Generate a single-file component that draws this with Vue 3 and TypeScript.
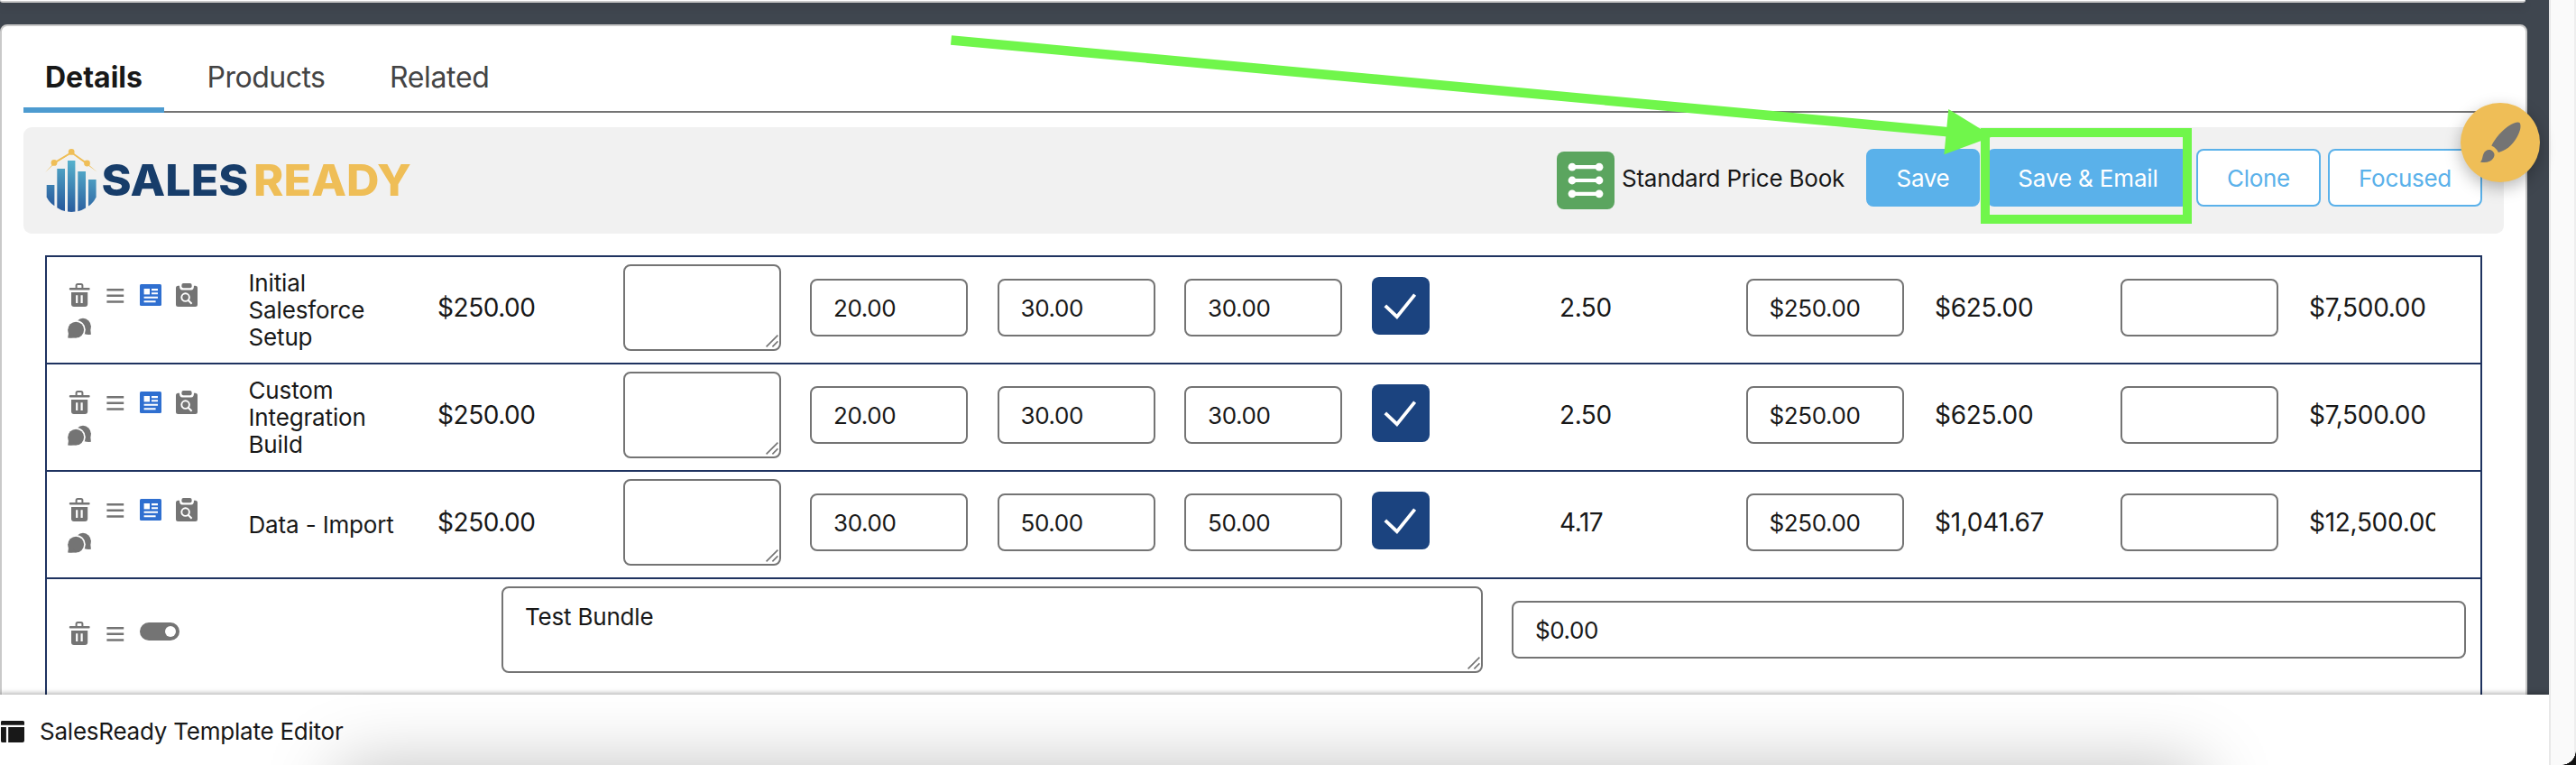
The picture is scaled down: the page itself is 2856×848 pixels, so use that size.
<script setup lang="ts">
interface Line {
  name: string
  rate: string
  low: string
  mid: string
  high: string
  months: string
  price: string
  monthly: string
  total: string
}

const tabs: string[] = ['Details', 'Products', 'Related']

const lines: Line[] = [
  { name: 'Initial Salesforce Setup', rate: '$250.00', low: '20.00', mid: '30.00', high: '30.00', months: '2.50', price: '$250.00', monthly: '$625.00', total: '$7,500.00' },
  { name: 'Custom Integration Build', rate: '$250.00', low: '20.00', mid: '30.00', high: '30.00', months: '2.50', price: '$250.00', monthly: '$625.00', total: '$7,500.00' },
  { name: 'Data - Import', rate: '$250.00', low: '30.00', mid: '50.00', high: '50.00', months: '4.17', price: '$250.00', monthly: '$1,041.67', total: '$12,500.00' },
]
</script>

<template>
  <div class="page">
    <main class="main">
      <section class="prev-card"></section>
      <section class="card">
        <nav class="tabs">
          <a v-for="(tab, i) in tabs" :key="tab" class="tab" :class="{ active: i === 0 }">{{ tab }}</a>
        </nav>

        <header class="toolbar">
          <svg class="logo" width="410" height="75" viewBox="50 165 410 75">
            <defs>
              <linearGradient id="barFill" gradientUnits="userSpaceOnUse" x1="88" y1="180" x2="72" y2="236">
                <stop offset="0" stop-color="#57b2cd" />
                <stop offset="1" stop-color="#27579b" />
              </linearGradient>
            </defs>
            <g fill="url(#barFill)">
              <path d="M51.7 205H60.4V228.3Q55 225 51.7 218.5Z" />
              <path d="M63.3 187H72V234Q67 233 63.3 230.3Z" />
              <path d="M75 178H83.4V234.6Q79 235.4 75 234.6Z" />
              <path d="M86.3 190H95V230.5Q91 233.2 86.3 234.2Z" />
              <path d="M98 199H106.6V218.5Q103.5 225 98 228.6Z" />
            </g>
            <path d="M50.2 191 60 180.4 79.2 168.6 96.5 181 107.8 190.8 96.5 182.4 79.2 170 60.5 181.6Z" fill="#efbe57" />
            <path d="M60 180.6 79.2 168.9 96.5 181.2" fill="none" stroke="#efbe57" stroke-width="1.7" />
            <g fill="#efbe57">
              <circle cx="60" cy="180.4" r="3.4" />
              <circle cx="79.2" cy="168.4" r="3.4" />
              <circle cx="96.5" cy="181" r="3.4" />
            </g>
            <text class="word sales" x="112.5" y="217" textLength="163" lengthAdjust="spacingAndGlyphs">SALES</text>
            <text class="word ready" x="281" y="217" textLength="175" lengthAdjust="spacingAndGlyphs">READY</text>
          </svg>

          <div class="actions">
            <svg class="book" width="64" height="64" viewBox="0 0 64 64">
              <rect width="64" height="64" rx="8" fill="#5ba55f" />
              <g stroke="#fff" stroke-width="4.2">
                <path d="M17 17.2H47M17 32H47M17 46.8H47" />
              </g>
              <g fill="#fff">
                <circle cx="17" cy="17.2" r="4.4" /><circle cx="47" cy="17.2" r="4.4" />
                <circle cx="17" cy="32" r="4.4" /><circle cx="47" cy="32" r="4.4" />
                <circle cx="17" cy="46.8" r="4.4" /><circle cx="47" cy="46.8" r="4.4" />
              </g>
            </svg>
            <span class="book-name">Standard Price Book</span>
            <button class="btn solid save">Save</button>
            <button class="btn solid email">Save &amp; Email</button>
            <button class="btn clone">Clone</button>
            <button class="btn focused">Focused</button>
          </div>
        </header>

        <div class="table">
          <div v-for="line in lines" :key="line.name" class="row">
            <div class="icons">
              <svg class="ico" viewBox="0 0 26 26">
                <path d="M9.6 5V2.6Q9.6 1 11.2 1H14.8Q16.4 1 16.4 2.6V5" fill="none" stroke="#747474" stroke-width="2" />
                <rect x="1.8" y="5" width="22.8" height="2.6" rx="1" fill="#747474" />
                <path d="M4 10H22.2V23Q22.2 26 19.2 26H7Q4 26 4 23Z" fill="#747474" />
                <path d="M10.2 13.2V22M15.6 13.2V22" stroke="#fff" stroke-width="2.2" />
              </svg>
              <svg class="ico" viewBox="0 0 26 26">
                <path d="M3.4 7.3H22.2M3.4 13.7H22.2M3.4 20.5H22.2" stroke="#747474" stroke-width="2.6" />
              </svg>
              <svg class="ico" viewBox="0 0 26 26">
                <rect x="1" y="1" width="24" height="24" rx="1.5" fill="#2f6fd0" />
                <rect x="5.6" y="6" width="6.4" height="6.4" fill="#fff" />
                <path d="M14 7.1H21M14 11.3H21M5.6 15.7H21M5.6 20.2H18.6" stroke="#fff" stroke-width="2.1" />
              </svg>
              <svg class="ico" viewBox="0 0 26 26">
                <path d="M3.5 2.7H5Q5 7.4 8 7.4H18Q21 7.4 21 2.7H22.5Q25 2.7 25 5.2V23.5Q25 26 22.5 26H3.5Q1 26 1 23.5V5.2Q1 2.7 3.5 2.7Z" fill="#747474" />
                <rect x="7.4" y="0" width="11.2" height="5.2" rx="2" fill="#747474" />
                <circle cx="11.6" cy="15.6" r="4.3" fill="none" stroke="#fff" stroke-width="1.9" />
                <path d="M14.6 18.8 18.6 22.8" stroke="#fff" stroke-width="2.1" />
              </svg>
              <svg class="ico" viewBox="0 0 26 26">
                <circle cx="17" cy="10.6" r="8.8" fill="#747474" />
                <path d="M25.7 10Q25 15 25.9 19.8Q22 20.3 18 19Z" fill="#747474" />
                <circle cx="9.2" cy="14.6" r="10.6" fill="#fff" />
                <circle cx="9.2" cy="14.6" r="8.9" fill="#747474" />
                <path d="M.4 14Q1.4 19 .2 23.4Q5 24 10 23.2Z" fill="#747474" />
              </svg>
            </div>
            <span class="name">{{ line.name }}</span>
            <span class="money rate">{{ line.rate }}</span>
            <div class="area">
              <svg class="grip" viewBox="0 0 14 14"><path d="M.6 13.4 13.4.6M7.4 13.4 13.4 7.4" /></svg>
            </div>
            <div class="field">{{ line.low }}</div>
            <div class="field">{{ line.mid }}</div>
            <div class="field">{{ line.high }}</div>
            <div class="check">
              <svg width="64" height="64" viewBox="0 0 64 64"><path d="M14.8 31.8 27.8 44.2 47.6 19.6" /></svg>
            </div>
            <span class="money">{{ line.months }}</span>
            <div class="field">{{ line.price }}</div>
            <span class="money long">{{ line.monthly }}</span>
            <div class="field"></div>
            <span class="money long last">{{ line.total }}</span>
          </div>

          <div class="bundle">
            <div class="icons bundle-icons">
              <svg class="ico" viewBox="0 0 26 26">
                <path d="M9.6 5V2.6Q9.6 1 11.2 1H14.8Q16.4 1 16.4 2.6V5" fill="none" stroke="#747474" stroke-width="2" />
                <rect x="1.8" y="5" width="22.8" height="2.6" rx="1" fill="#747474" />
                <path d="M4 10H22.2V23Q22.2 26 19.2 26H7Q4 26 4 23Z" fill="#747474" />
                <path d="M10.2 13.2V22M15.6 13.2V22" stroke="#fff" stroke-width="2.2" />
              </svg>
              <svg class="ico" viewBox="0 0 26 26">
                <path d="M3.4 7.3H22.2M3.4 13.7H22.2M3.4 20.5H22.2" stroke="#747474" stroke-width="2.6" />
              </svg>
              <svg class="toggle" width="44" height="20" viewBox="0 0 44 20">
                <rect width="44" height="20" rx="10" fill="#747474" />
                <circle cx="34" cy="10" r="6" fill="#fff" />
              </svg>
            </div>
            <div class="area bundle-name">
              Test Bundle
              <svg class="grip" viewBox="0 0 14 14"><path d="M.6 13.4 13.4.6M7.4 13.4 13.4 7.4" /></svg>
            </div>
            <div class="field bundle-price">$0.00</div>
          </div>
        </div>
      </section>
    </main>

    <aside class="scrollbar"></aside>

    <button class="brush">
      <svg width="88" height="88" viewBox="0 0 88 88">
        <path d="M65.5 22C67.8 26 66 32 62 39C57 47.500 50 53 42 55C40.500 52 38.500 49.500 34.300 47.500C38 40 46 29.500 56 24C60 21.800 63.500 20.800 65.500 22Z" fill="#747474" />
        <path d="M34 52.500C37.500 54.500 38.500 57.500 36.500 61C34 65.500 28 67 21.800 65.600C24.500 63.500 24 60 25.500 56.500C27 53 30.500 51.200 34 52.500Z" fill="#747474" />
      </svg>
    </button>

    <svg class="pointer" width="1180" height="160" viewBox="1040 30 1180 160">
      <path d="M1054.500 44.500 2160 146.200" stroke="#70f64b" stroke-width="10.600" fill="none" />
      <path d="M2160.300 121 2209.500 151.300 2155.400 171.300Z" fill="#70f64b" />
    </svg>
    <div class="highlight"></div>

    <footer class="dock">
      <div class="window-shade"></div>
      <svg class="dock-icon" width="27" height="24" viewBox="0 0 27 24">
        <path d="M1 1.200Q1 0 2.500 0H25.500Q27 0 27 1.500V4.800H1ZM1 7H6.900V24H3Q1 24 1 22.500ZM9.200 7H27V22Q27 24 25 24H9.200Z" fill="#181818" />
      </svg>
      <span class="dock-label">SalesReady Template Editor</span>
    </footer>
    <div class="corner"></div>
  </div>
</template>

<style>
body {
  margin: 0;
  overflow: hidden;
}
</style>

<style scoped>
.page {
  position: relative;
  display: flex;
  width: 2856px;
  height: 848px;
  overflow: hidden;
  background: #3f464f;
  color: #181818;
  font-family: "Inter", "Liberation Sans", sans-serif;
  font-size: 26px;
}
.page * {
  box-sizing: border-box;
}
.main {
  width: 2826px;
  height: 848px;
  overflow: hidden;
}
.prev-card {
  width: 2800px;
  height: 3px;
  margin-bottom: 24px;
  background: #fff;
  border-bottom: 2px solid #c9c9c9;
  border-radius: 0 0 6px 6px;
  box-shadow: 0 4px 10px rgba(0, 0, 0, 0.16);
}
.card {
  width: 2802px;
  height: 900px;
  padding: 16px 24px 0;
  background: #fff;
  border: 2px solid #c9c9c9;
  border-radius: 8px;
}
.tabs {
  display: flex;
  gap: 23.5px;
  height: 80px;
  box-shadow: inset 0 -2px 0 #747474;
}
.tab {
  padding: 0 24px;
  font-size: 32px;
  line-height: 81px;
  letter-spacing: -0.5px;
  color: #444;
}
.tab:last-child {
  letter-spacing: -0.35px;
}
.tab.active {
  width: 156px;
  font-weight: 700;
  letter-spacing: 0;
  color: #181818;
  box-shadow: inset 0 -6px 0 #4d9bd0;
}
.toolbar {
  display: flex;
  justify-content: space-between;
  align-items: center;
  height: 118px;
  margin-top: 16px;
  padding: 0 24px;
  background: #f1f1f1;
  border-radius: 9px;
}
.logo {
  margin-top: 5px;
}
.word {
  font-size: 48px;
  font-weight: 800;
}
.sales {
  fill: #173d6a;
}
.ready {
  fill: #efbe57;
}
.actions {
  display: flex;
  align-items: center;
}
.book-name {
  width: 248px;
  margin: 0 23px 5px 8px;
  letter-spacing: -0.22px;
  white-space: nowrap;
}
.btn {
  height: 64px;
  margin: 0 0 6px 8px;
  padding: 0;
  border: 2px solid #5ab1ea;
  border-radius: 8px;
  background: #fff;
  color: #5ab1ea;
  font: 400 26px "Inter", sans-serif;
  letter-spacing: -0.3px;
}
.solid {
  background: #5ab1ea;
  color: #fff;
}
.save {
  width: 126px;
  margin-left: 0;
}
.email {
  width: 224px;
  letter-spacing: -0.15px;
}
.clone {
  width: 138px;
}
.focused {
  width: 171px;
}
.table {
  height: 640px;
  margin: 24px 24px 0;
  border: 2px solid #1f3360;
}
.row {
  display: grid;
  grid-template-columns: repeat(12, 207.5px) 142px;
  align-items: center;
  height: 119px;
  padding: 0 0 5px 16px;
  border-bottom: 2px solid #1f3360;
}
.icons {
  display: grid;
  grid-template-columns: repeat(4, 39.6px);
  row-gap: 11px;
  width: 159px;
  padding-left: 7px;
  margin-top: 9px;
}
.ico {
  display: block;
  width: 26px;
  height: 26px;
}
.name {
  width: 175px;
  margin-top: 5px;
  line-height: 30px;
  letter-spacing: -0.15px;
}
.money {
  padding-left: 1px;
  font-size: 28px;
  letter-spacing: -0.45px;
  white-space: nowrap;
}
.rate {
  padding-left: 2px;
}
.long {
  padding-left: 2px;
  letter-spacing: -0.3px;
}
.last {
  width: 141.5px;
  overflow: hidden;
}
.area {
  position: relative;
  width: 175px;
  height: 96px;
  border: 2px solid #747474;
  border-radius: 8px;
}
.grip {
  position: absolute;
  right: 1px;
  bottom: 2px;
  width: 14px;
  height: 14px;
  fill: none;
  stroke: #747474;
  stroke-width: 1.6;
}
.field {
  width: 175px;
  height: 64px;
  padding-left: 24px;
  border: 2px solid #747474;
  border-radius: 8px;
  line-height: 61px;
  letter-spacing: -0.4px;
}
.check {
  width: 64px;
  height: 64px;
  margin-bottom: 4px;
  border-radius: 8px;
  background: #1b437f;
}
.check path {
  fill: none;
  stroke: #fff;
  stroke-width: 3.8;
}
.bundle {
  display: flex;
  align-items: center;
  height: 112px;
  padding-left: 16px;
}
.bundle-icons {
  width: 488px;
  margin-top: 8px;
}
.toggle {
  display: block;
  margin: 1px 0 0 1px;
}
.bundle-name {
  width: 1088px;
  padding: 16px 24px;
  line-height: 32px;
  letter-spacing: -0.2px;
}
.bundle-price {
  width: 1058px;
  margin-left: 32px;
}
.scrollbar {
  width: 30px;
  height: 848px;
  background: #fafafa;
  border-left: 2px solid #e8e8e8;
  border-right: 2px solid #eee;
}
.brush {
  position: absolute;
  left: 2728px;
  top: 114px;
  width: 88px;
  height: 88px;
  padding: 0;
  border: 0;
  border-radius: 50%;
  background: #efbe57;
  box-shadow: 0 6px 18px rgba(0, 0, 0, 0.28);
}
.brush svg {
  display: block;
}
.pointer {
  position: absolute;
  left: 1040px;
  top: 30px;
}
.highlight {
  position: absolute;
  left: 2196px;
  top: 142px;
  width: 234px;
  height: 106px;
  border: 10px solid #70f64b;
}
.dock {
  position: absolute;
  left: 0;
  top: 770px;
  display: flex;
  align-items: center;
  width: 2826px;
  height: 78px;
  background: #fff;
  box-shadow: 0 -2px 5px rgba(0, 0, 0, 0.28);
  clip-path: inset(-12px 0 0 0);
}
.window-shade {
  position: absolute;
  left: 375px;
  top: 80px;
  width: 2065px;
  height: 200px;
  box-shadow: 0 0 80px rgba(0, 0, 0, 0.25);
}
.dock-icon {
  margin-top: 4px;
}
.dock-label {
  margin: 3px 0 0 17px;
  letter-spacing: -0.23px;
}
.corner {
  position: absolute;
  left: 2840px;
  top: 832px;
  width: 16px;
  height: 16px;
  background: radial-gradient(circle at 0 0, transparent 15.5px, #111 16px);
}
</style>
